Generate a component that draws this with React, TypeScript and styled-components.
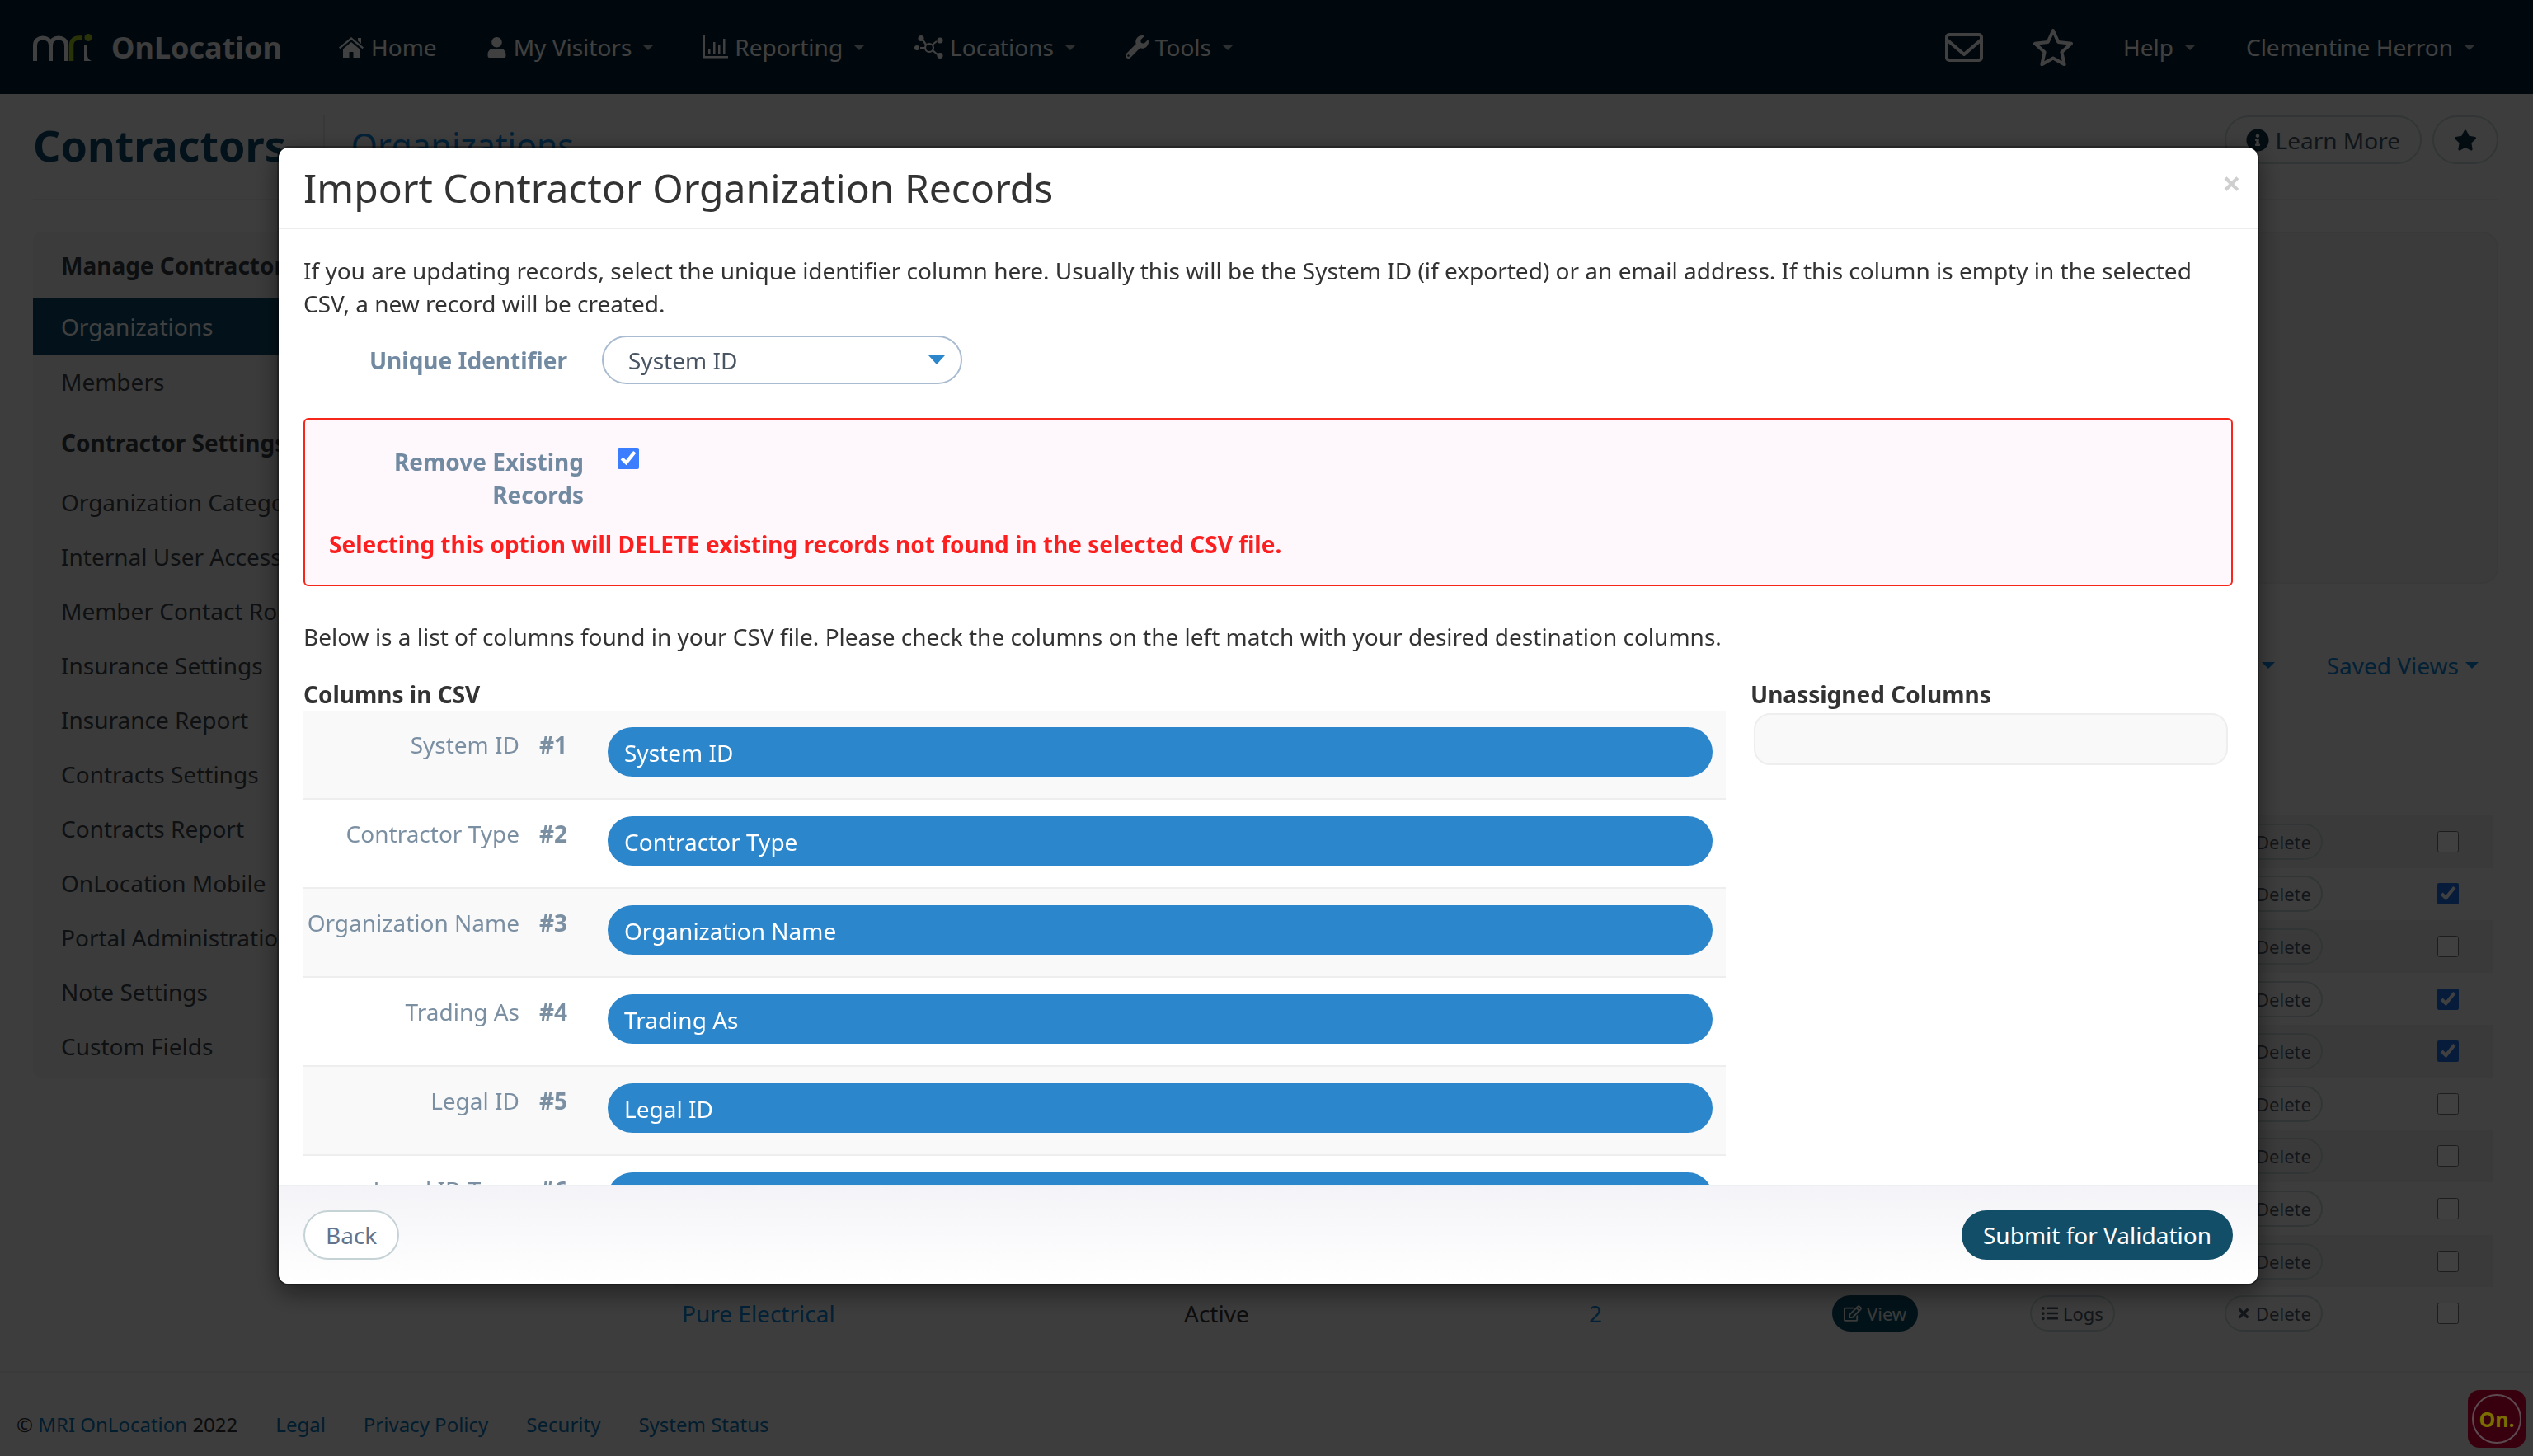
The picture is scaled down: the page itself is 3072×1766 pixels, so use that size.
import React from "react";
import styled, { createGlobalStyle } from "styled-components";
import { FaUser, FaWrench, FaInfoCircle, FaStar, FaRegEdit, FaListUl, FaTimes } from "react-icons/fa";

const Global = createGlobalStyle`
  html, body { margin: 0; padding: 0; height: 100%; overflow: hidden; }
  body { font-family: "Noto Sans", "DejaVu Sans", sans-serif; font-size: 28px; color: #333; background: #f1f1f1; }
  * { box-sizing: border-box; }
`;

const Page = styled.div`
  height: 1766px;
  display: flex;
  flex-direction: column;
  background: #f1f1f1;
`;
const Nav = styled.nav`
  height: 114px;
  flex: none;
  display: flex;
  align-items: center;
  padding: 0 70px 0 40px;
  background: #052236;
  color: #fff;
`;
const Brand = styled.div`
  display: flex;
  align-items: center;
  gap: 23px;
  width: 370px;
`;
const BrandName = styled.span`
  font-size: 36px;
  font-weight: 700;
  color: #f2f2f2;
`;
const NavGroup = styled.div`
  display: flex;
  align-items: center;
  gap: 60px;
`;
const NavEnd = styled(NavGroup)`
  margin-left: auto;
  gap: 61px;
`;
const NavItem = styled.a`
  display: flex;
  align-items: center;
  gap: 8px;
  font-size: 28px;
  line-height: 40px;
  color: #fff;
`;
const NavCaret = styled.i`
  display: block;
  width: 0;
  height: 0;
  margin-left: 5px;
  border: 7.5px solid transparent;
  border-top-color: rgba(255, 255, 255, 0.7);
  border-bottom-width: 0;
`;
const Main = styled.main`
  height: 1549px;
  flex: none;
  padding: 26px 42px 0 40px;
`;
const TitleRow = styled.header`
  height: 103px;
  display: flex;
  align-items: flex-start;
  border-bottom: 2px solid #e6e6e6;
`;
const Title = styled.h1`
  margin: 0;
  padding-right: 45px;
  font-size: 52px;
  line-height: 72px;
  font-weight: 700;
  color: #0d4a68;
  border-right: 2px solid #e0e0e0;
`;
const Subtitle = styled.span`
  margin-left: 32px;
  font-size: 41px;
  line-height: 72px;
  color: #0a84d8;
`;
const HeadActions = styled.div`
  margin-left: auto;
  display: flex;
  gap: 13px;
`;
const OutlineButton = styled.button`
  height: 59px;
  padding: 0 24px;
  display: flex;
  align-items: center;
  gap: 8px;
  border: 2px solid #c4d4d2;
  border-radius: 30px;
  background: transparent;
  font: inherit;
  color: #3f5563;
`;
const Layout = styled.div`
  display: grid;
  grid-template-columns: 500px 1fr;
  gap: 0;
  margin-top: 38px;
`;
const Sidebar = styled.aside`
  height: 1027px;
  width: 500px;
  background: #ebebeb;
  border-radius: 12px;
`;
const SideHead = styled.div<{ $h: number }>`
  height: ${(p) => p.$h}px;
  padding: 21px 34px 0;
  font-weight: 700;
  color: #333a40;
  line-height: 40px;
  white-space: nowrap;
`;
const SideItem = styled.div<{ $active?: boolean }>`
  height: ${(p) => (p.$active ? 68 : 66)}px;
  display: flex;
  align-items: center;
  padding: 0 34px;
  white-space: nowrap;
  color: ${(p) => (p.$active ? "#fff" : "#3a4249")};
  background: ${(p) => (p.$active ? "#0d4a68" : "transparent")};
`;
const Content = styled.section`
  min-width: 0;
`;
const FilterCard = styled.div`
  height: 427px;
  background: #ebebeb;
  border: 2px solid #e4e4e4;
  border-radius: 20px;
`;
const ViewsBar = styled.div`
  margin-top: 79px;
  height: 40px;
  display: flex;
  justify-content: flex-end;
  align-items: center;
  gap: 63px;
  padding-right: 24px;
  color: #0a84d8;
`;
const ViewsItem = styled.span`
  display: flex;
  align-items: center;
  gap: 8px;
`;
const ViewsCaret = styled.i`
  display: block;
  width: 0;
  height: 0;
  border: 8px solid transparent;
  border-top-color: #0a84d8;
  border-bottom-width: 0;
`;
const Table = styled.div`
  margin-top: 162px;
  margin-left: 278px;
  width: 2206px;
`;
const TableRow = styled.div`
  height: 63.6px;
  display: grid;
  grid-template-columns: 609px 491px 295px 240px 236px 258px 26px;
  padding-left: 9px;
  align-items: center;
  &:nth-child(odd) {
    background: #e8e8e8;
  }
  &:last-child {
    background: transparent;
  }
`;
const NameLink = styled.a`
  color: #0a84d8;
`;
const CountLink = styled.a`
  color: #0a84d8;
`;
const RowPill = styled.a<{ $fill?: boolean }>`
  justify-self: start;
  height: 44px;
  display: inline-flex;
  align-items: center;
  gap: 6px;
  padding: 0 12px;
  border-radius: 22px;
  font-size: 22px;
  border: 2px solid ${(p) => (p.$fill ? "#0a4a66" : "#c4d4d2")};
  background: ${(p) => (p.$fill ? "#0a4a66" : "transparent")};
  color: ${(p) => (p.$fill ? "#e8e8e8" : "#4a5563")};
`;
const RowCheck = styled.input`
  width: 26px;
  height: 26px;
  margin: 0;
  accent-color: #1a6fe8;
`;
const Foot = styled.footer`
  flex: 1;
  display: flex;
  align-items: center;
  gap: 46px;
  padding: 24px 0 0 20px;
  border-top: 2px solid #e6e6e6;
  font-size: 24px;
  color: #333;
`;
const FootLink = styled.a`
  color: #0a74b8;
`;
const Copy = styled.span`
  display: block;
`;
const Badge = styled.div`
  position: fixed;
  right: 9px;
  bottom: 10px;
  width: 70px;
  height: 70px;
  z-index: 5;
  display: flex;
  align-items: center;
  justify-content: center;
  border-radius: 14px;
  background: #38000f;
`;
const BadgeRing = styled.div`
  width: 60px;
  height: 60px;
  border: 2px solid #5d4a50;
  border-radius: 50%;
  display: flex;
  align-items: center;
  justify-content: center;
  font-size: 25px;
  font-weight: 700;
  color: #7c6d00;
`;

const Overlay = styled.div`
  position: fixed;
  inset: 0;
  z-index: 2;
  padding: 179px 0 0 338px;
  background: rgba(0, 0, 0, 0.75);
`;
const Modal = styled.div`
  width: 2400px;
  height: 1378px;
  display: flex;
  flex-direction: column;
  overflow: hidden;
  background: #fff;
  border-radius: 12px;
  box-shadow: 0 0 0 2px rgba(0, 0, 0, 0.3), 0 10px 30px rgba(0, 0, 0, 0.5);
`;
const ModalHead = styled.header`
  height: 99px;
  flex: none;
  display: flex;
  align-items: flex-start;
  justify-content: space-between;
  padding: 16px 20px 0 30px;
  border-bottom: 2px solid #eceeef;
`;
const ModalTitle = styled.h2`
  margin: 0;
  font-size: 48px;
  line-height: 66px;
  font-weight: 400;
  color: #333;
`;
const Close = styled.span`
  margin-top: 2px;
  font-size: 40px;
  line-height: 50px;
  font-weight: 700;
  color: #cfcfcf;
`;
const ModalBody = styled.div`
  flex: 1;
  min-height: 0;
  overflow: hidden;
  padding: 30px 30px 0;
  line-height: 40px;
`;
const Para = styled.p`
  margin: 0;
`;
const IdRow = styled.div`
  margin-top: 19px;
  display: flex;
  align-items: center;
  gap: 42px;
`;
const FormLabel = styled.label<{ $w: number }>`
  width: ${(p) => p.$w}px;
  flex: none;
  text-align: right;
  font-weight: 700;
  color: #718aa1;
`;
const Select = styled.div`
  width: 437px;
  height: 59px;
  display: flex;
  align-items: center;
  justify-content: space-between;
  padding: 0 19px 0 30px;
  border: 2px solid #a9bbd0;
  border-radius: 30px;
  color: #4a5563;
`;
const SelectCaret = styled.i`
  display: block;
  width: 0;
  height: 0;
  border: 10px solid transparent;
  border-top: 11px solid #2c86cb;
  border-bottom-width: 0;
`;
const Warn = styled.div`
  margin-top: 41px;
  height: 204px;
  padding: 31px 29px 0;
  border: 2px solid #f6261b;
  border-radius: 6px;
  background: #fef8fd;
  margin-right: 0;
`;
const WarnRow = styled.div`
  display: flex;
  align-items: flex-start;
  gap: 41px;
`;
const ModalCheck = styled.input`
  width: 26px;
  height: 26px;
  margin: 3px 0 0;
  accent-color: #3b7dff;
`;
const WarnText = styled.div`
  margin-top: 20px;
  font-weight: 700;
  color: #fb1f1f;
`;
const Below = styled.p`
  margin: 41px 0 0;
`;
const Columns = styled.div`
  margin-top: 30px;
  display: grid;
  grid-template-columns: 1725px 1fr;
  gap: 30px;
`;
const ColHead = styled.div`
  font-weight: 700;
  color: #333;
`;
const MapRow = styled.div`
  height: 108px;
  display: flex;
  align-items: flex-start;
  padding: 21px 16px 0 0;
  border-bottom: 2px solid #eee;
  &:nth-child(odd) {
    background: #f9f9fa;
  }
`;
const MapName = styled.span`
  width: 262px;
  flex: none;
  text-align: right;
  white-space: nowrap;
  color: #7b8fa2;
`;
const MapHash = styled.span`
  width: 36px;
  margin-left: 24px;
  flex: none;
  font-weight: 700;
  color: #7b8fa2;
`;
const MapPill = styled.div`
  flex: 1;
  height: 60px;
  margin-left: 47px;
  margin-top: -1px;
  display: flex;
  align-items: center;
  padding: 2px 20px 0;
  border-radius: 30px;
  background: #2c86cb;
  color: #fff;
`;
const Unassigned = styled.div`
  height: 63px;
  margin: 3px 6px 0 4px;
  border: 2px solid #eee;
  border-radius: 20px;
  background: #f9f9f9;
`;
const ModalFoot = styled.footer`
  height: 120px;
  flex: none;
  display: flex;
  align-items: center;
  justify-content: space-between;
  padding: 0 30px;
  border-top: 2px solid #eef1f3;
  background: linear-gradient(#f4f4f8, #fff);
`;
const BackBtn = styled.button`
  height: 60px;
  padding: 0 25px;
  border: 2px solid #c5d2d6;
  border-radius: 30px;
  background: #fff;
  font: inherit;
  color: #63748c;
`;
const SubmitBtn = styled.button`
  height: 60px;
  padding: 0 26px;
  border: 0;
  border-radius: 30px;
  background: #124e68;
  font: inherit;
  color: #fff;
`;

const Logo = () => (
  <svg width="72" height="33" viewBox="0 0 72 33" fill="none">
    <path d="M2.5 33V14C2.5 8 7 5 12 5s9.5 3 9.5 9v19M21.5 14c0-6 4.500-9 9.500-9s9.500 3 9.500 9v19" stroke="#fff" strokeWidth="5" />
    <path d="M46.500 33V14c0-6 4-9 9-9h4" stroke="#a8c81e" strokeWidth="5.500" />
    <path d="M66 13v12c0 4 1 6 5 8h-9V13z" fill="#fff" />
    <circle cx="67" cy="4.500" r="4.500" fill="#a8c81e" />
  </svg>
);
const HomeIcon = () => (
  <svg width="32" height="26" viewBox="0 0 32 26" fill="#fff">
    <path d="M1 13.500 16 1l15 12.500-1.500 1.800L16 4 2.500 15.300z" />
    <path d="M24 2h4v7l-4-3.500zM6 15.500 16 7l10 8.500V26h-7.500v-7h-5v7H6z" />
  </svg>
);
const ChartIcon = () => (
  <svg width="30" height="28" viewBox="0 0 30 28" fill="#fff">
    <path d="M0 0h2v25h28v2.500H0z" />
    <path d="M6 16h2.500v6H6zM12 8h2.500v14H12zM18 11h2.500v11H18zM24 4h2.500v18H24z" />
  </svg>
);
const NetIcon = () => (
  <svg width="35" height="28" viewBox="0 0 35 28" fill="none" stroke="#fff" strokeWidth="2.200">
    <circle cx="18" cy="15" r="5" />
    <path d="M14 11 9 4M22 18l7 6M13 15H7M22 11l5-4" />
    <g fill="#fff" stroke="none">
      <circle cx="8" cy="3.500" r="3.500" />
      <circle cx="31" cy="6" r="3.500" />
      <circle cx="3" cy="15" r="3" />
      <circle cx="31" cy="24.500" r="3.500" />
    </g>
  </svg>
);
const MailIcon = () => (
  <svg width="46" height="35" viewBox="0 0 46 35" fill="none" stroke="#fff" strokeWidth="4" strokeLinejoin="round">
    <rect x="2" y="2" width="42" height="31" rx="3" />
    <path d="M2 8 23 26 44 8" />
  </svg>
);
const StarOutline = () => (
  <svg width="48" height="46" viewBox="0 0 48 46" fill="none" stroke="#fff" strokeWidth="4" strokeLinejoin="round">
    <path d="M24 3l6.300 14 15.700 1.800-11.600 10.400 3.200 15L24 36.500 10.400 44.200l3.200-15L2 18.800 17.700 17z" />
  </svg>
);

const navItems: [React.ReactNode, string, boolean][] = [
  [<HomeIcon key="h" />, "Home", false],
  [<FaUser key="u" size={25} />, "My Visitors", true],
  [<ChartIcon key="c" />, "Reporting", true],
  [<NetIcon key="n" />, "Locations", true],
  [<FaWrench key="w" size={28} />, "Tools", true],
];
const sideItems = [
  "Organization Categories",
  "Internal User Access",
  "Member Contact Roles",
  "Insurance Settings",
  "Insurance Report",
  "Contracts Settings",
  "Contracts Report",
  "OnLocation Mobile",
  "Portal Administration",
  "Note Settings",
  "Custom Fields",
];
const checked = [false, true, false, true, true, false, false, false, false, false];
const mapping = ["System ID", "Contractor Type", "Organization Name", "Trading As", "Legal ID", "Legal ID Type"];

export default function App() {
  return (
    <>
      <Global />
      <Page>
        <Nav>
          <Brand>
            <Logo />
            <BrandName>OnLocation</BrandName>
          </Brand>
          <NavGroup>
            {navItems.map(([icon, label, caret]) => (
              <NavItem key={label}>
                {icon}
                {label}
                {caret && <NavCaret />}
              </NavItem>
            ))}
          </NavGroup>
          <NavEnd>
            <MailIcon />
            <StarOutline />
            <NavItem>Help<NavCaret /></NavItem>
            <NavItem>Clementine Herron<NavCaret /></NavItem>
          </NavEnd>
        </Nav>
        <Main>
          <TitleRow>
            <Title>Contractors</Title>
            <Subtitle>Organizations</Subtitle>
            <HeadActions>
              <OutlineButton><FaInfoCircle size={28} color="#0d3346" />Learn More</OutlineButton>
              <OutlineButton><FaStar size={28} color="#0d3346" /></OutlineButton>
            </HeadActions>
          </TitleRow>
          <Layout>
            <Sidebar>
              <SideHead $h={81}>Manage Contractors</SideHead>
              <SideItem $active>Organizations</SideItem>
              <SideItem>Members</SideItem>
              <SideHead $h={80}>Contractor Settings</SideHead>
              {sideItems.map((s) => (
                <SideItem key={s}>{s}</SideItem>
              ))}
            </Sidebar>
            <Content>
              <FilterCard />
              <ViewsBar>
                <ViewsItem>Columns<ViewsCaret /></ViewsItem>
                <ViewsItem>Saved Views<ViewsCaret /></ViewsItem>
              </ViewsBar>
              <Table>
                {checked.map((c, i) => (
                  <TableRow key={i}>
                    <NameLink>{i === 9 ? "Pure Electrical" : ""}</NameLink>
                    <span>{i === 9 ? "Active" : ""}</span>
                    <CountLink>{i === 9 ? "2" : ""}</CountLink>
                    <RowPill $fill><FaRegEdit size={22} />View</RowPill>
                    <RowPill><FaListUl size={20} />Logs</RowPill>
                    <RowPill><FaTimes size={18} />Delete</RowPill>
                    <RowCheck type="checkbox" defaultChecked={c} />
                  </TableRow>
                ))}
              </Table>
            </Content>
          </Layout>
        </Main>
        <Foot>
          <Copy>© <FootLink>MRI OnLocation</FootLink> 2022</Copy>
          <FootLink>Legal</FootLink>
          <FootLink>Privacy Policy</FootLink>
          <FootLink>Security</FootLink>
          <FootLink>System Status</FootLink>
        </Foot>
      </Page>
      <Overlay>
        <Modal>
          <ModalHead>
            <ModalTitle>Import Contractor Organization Records</ModalTitle>
            <Close>×</Close>
          </ModalHead>
          <ModalBody>
            <Para>
              If you are updating records, select the unique identifier column here. Usually this will be the System ID (if exported) or an email address. If this column is empty in the selected CSV, a new record will be created.
            </Para>
            <IdRow>
              <FormLabel $w={320}>Unique Identifier</FormLabel>
              <Select>System ID<SelectCaret /></Select>
            </IdRow>
            <Warn>
              <WarnRow>
                <FormLabel $w={309}>Remove Existing Records</FormLabel>
                <ModalCheck type="checkbox" defaultChecked />
              </WarnRow>
              <WarnText>Selecting this option will DELETE existing records not found in the selected CSV file.</WarnText>
            </Warn>
            <Below>Below is a list of columns found in your CSV file. Please check the columns on the left match with your desired destination columns.</Below>
            <Columns>
              <div>
                <ColHead>Columns in CSV</ColHead>
                <div>
                  {mapping.map((m, i) => (
                    <MapRow key={m}>
                      <MapName>{m}</MapName>
                      <MapHash>#{i + 1}</MapHash>
                      <MapPill>{m}</MapPill>
                    </MapRow>
                  ))}
                </div>
              </div>
              <div>
                <ColHead>Unassigned Columns</ColHead>
                <Unassigned />
              </div>
            </Columns>
          </ModalBody>
          <ModalFoot>
            <BackBtn>Back</BackBtn>
            <SubmitBtn>Submit for Validation</SubmitBtn>
          </ModalFoot>
        </Modal>
      </Overlay>
      <Badge><BadgeRing>On.</BadgeRing></Badge>
    </>
  );
}
